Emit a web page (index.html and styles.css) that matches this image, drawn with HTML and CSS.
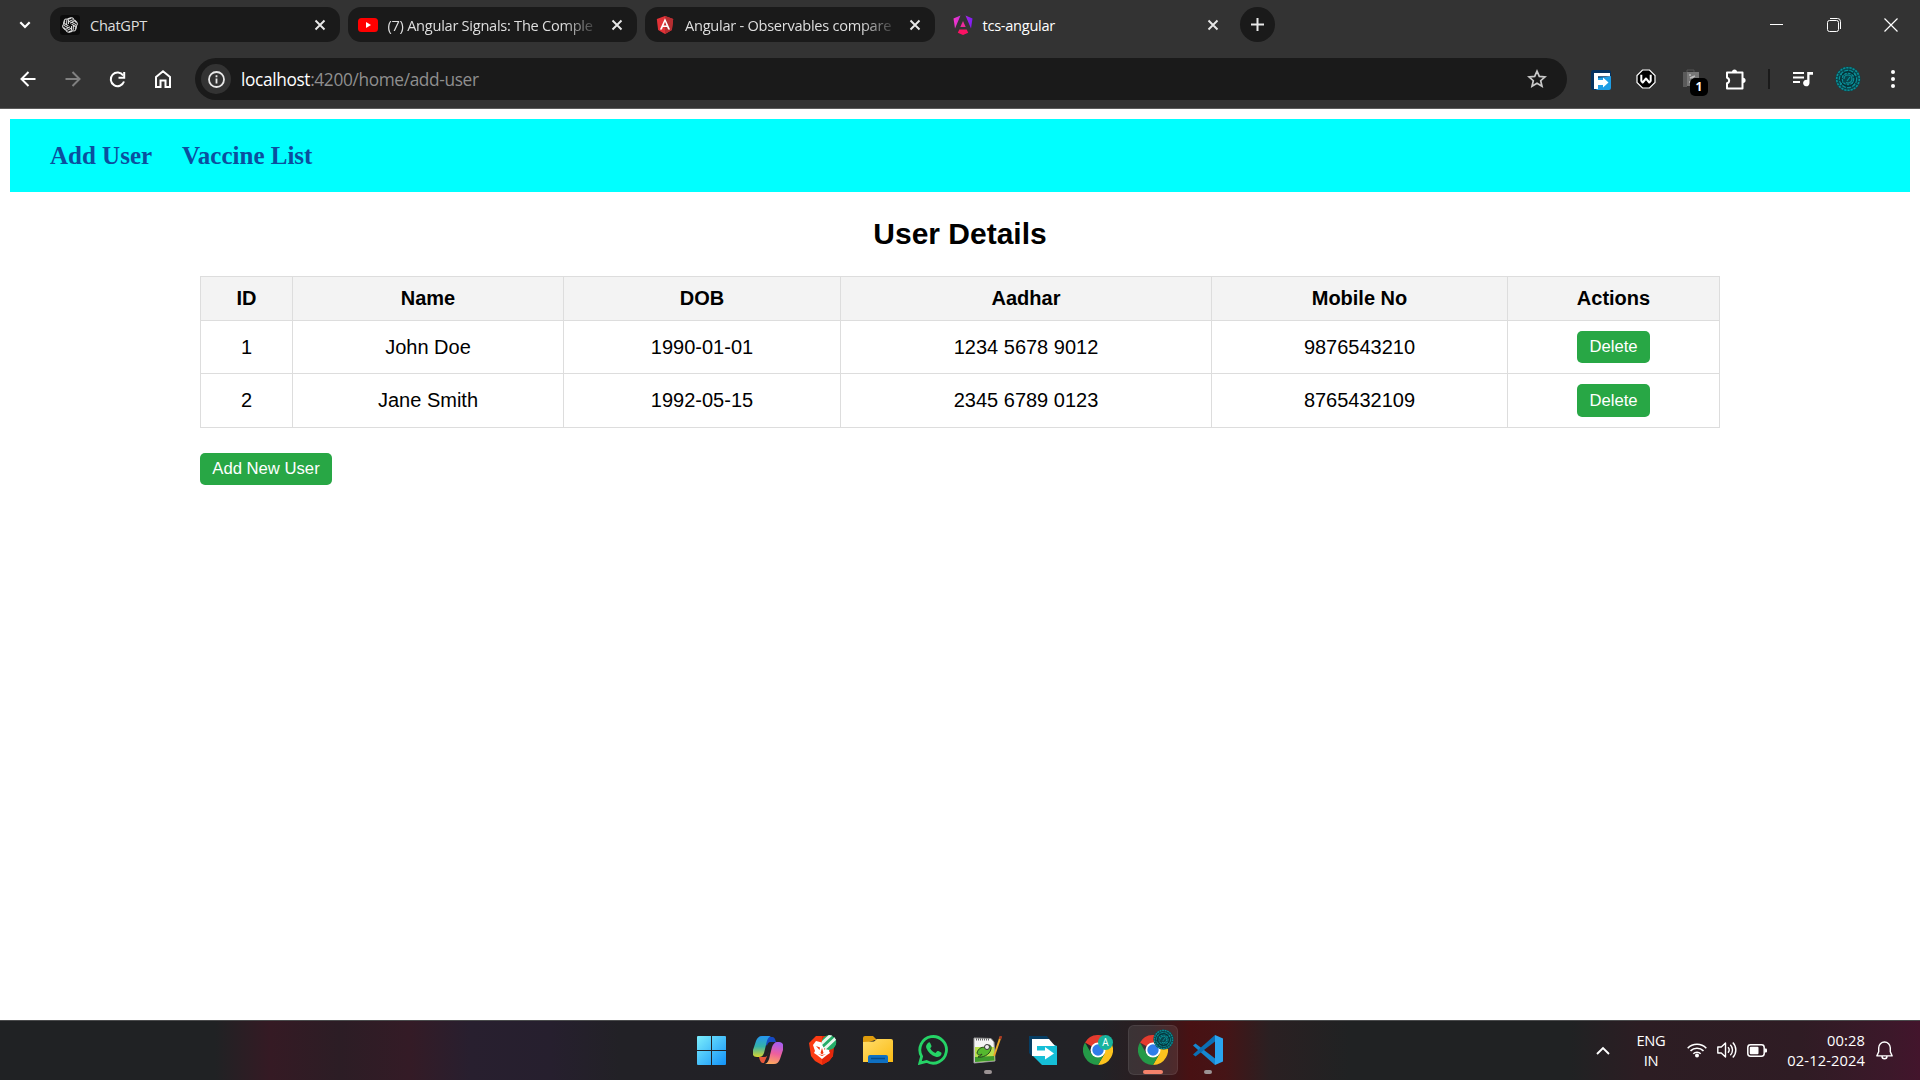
FILE: index.html
```html
<!DOCTYPE html>
<html lang="en">
<head>
<meta charset="utf-8">
<title>tcs-angular</title>
<link rel="stylesheet" href="styles.css">
</head>
<body>
<svg class="defs" width="0" height="0" aria-hidden="true">
  <defs>
    <symbol id="close" viewBox="0 0 12 12"><path d="M1.500 1.500l9 9M10.500 1.500l-9 9" fill="none" stroke="currentColor" stroke-width="1.900"/></symbol>
    <symbol id="swirl" viewBox="0 0 26 26">
      <circle cx="13" cy="13" r="12.500" fill="#07474e"/>
      <g fill="none" stroke="#0b8f97">
        <circle cx="13" cy="13" r="11.300" stroke-width="1.600" stroke-dasharray="2.200 1"/>
        <circle cx="13" cy="13" r="8.600" stroke-width="1.200" stroke-dasharray="4 1.200"/>
        <circle cx="13" cy="13" r="5.800" stroke-width="1.300" stroke-dasharray="2.500 1.300"/>
        <path d="M9 13a4 4 0 0 1 8 0M17 13a4 4 0 0 1-6 3.500M12 15l3-4M5 8l3 2M21 8l-3 2M5 19l3-3M20 19l-3-3" stroke-width="1.200"/>
      </g>
      <circle cx="13" cy="13" r="7.200" fill="none" stroke="#042a30" stroke-width="1"/>
    </symbol>
    <symbol id="chrome" viewBox="0 0 30 30">
      <path d="M15 15L2 7.500A15 15 0 0 1 28 7.500z" fill="#e33b2e"/>
      <path d="M15 7.500H28A15 15 0 0 1 15 30l6.500-11.200z" fill="#fcc31e"/>
      <path d="M2 7.500l6.500 11.200L15 22.500l6.500-3.700L15 30A15 15 0 0 1 2 7.500z" fill="#249a48"/>
      <circle cx="15" cy="15" r="7.500" fill="#fff"/>
      <circle cx="15" cy="15" r="5.700" fill="#2f7de9"/>
    </symbol>
    <linearGradient id="winG" x1="0" y1="0" x2="1" y2="1"><stop offset="0" stop-color="#7ceefc"/><stop offset="1" stop-color="#1292f8"/></linearGradient>
    <linearGradient id="ngG" x1="0" y1="0" x2="1" y2="0"><stop offset="0" stop-color="#f637c8"/><stop offset="1" stop-color="#7c1cf5"/></linearGradient>
    <linearGradient id="cpA" x1="0" y1="0" x2="0" y2="1"><stop offset="0" stop-color="#2496f2"/><stop offset=".5" stop-color="#35b2a8"/><stop offset="1" stop-color="#dad62f"/></linearGradient>
    <linearGradient id="cpB" x1="0.500" y1="0" x2="0.300" y2="1"><stop offset="0" stop-color="#a75df1"/><stop offset=".5" stop-color="#ee5f9d"/><stop offset="1" stop-color="#fdab5c"/></linearGradient>
    <linearGradient id="fold" x1="0" y1="0" x2="1" y2="1"><stop offset="0" stop-color="#ffdd6b"/><stop offset="1" stop-color="#fbbb13"/></linearGradient>
    <clipPath id="badgeClip"><circle cx="20" cy="7.500" r="7.500"/></clipPath>
  </defs>
</svg>

<header class="browser">
  <div class="tabstrip">
    <div class="tab-search"><svg width="12" height="8" viewBox="0 0 12 8"><path d="M1.300 1.300L6 6l4.700-4.700" fill="none" stroke="#fff" stroke-width="2.200"/></svg></div>
    <div class="tab">
      <svg class="fav" width="20" height="20" viewBox="0 0 20 20"><rect width="20" height="20" rx="3" fill="#0b0b0b"/>
        <g fill="none" stroke="#ddd" stroke-width="1.150" stroke-linejoin="round" transform="translate(1 1) scale(.9)">
          <g id="petal"><path d="M8.300 9V4.900a3.200 3.200 0 0 1 5.800-1.600M8.300 6.700L12 4.600a3.200 3.200 0 0 1 4.700 3"/></g>
          <use href="#petal" transform="rotate(60 10 10)"/><use href="#petal" transform="rotate(120 10 10)"/><use href="#petal" transform="rotate(180 10 10)"/><use href="#petal" transform="rotate(240 10 10)"/><use href="#petal" transform="rotate(300 10 10)"/>
        </g></svg>
      <span class="tab-title">ChatGPT</span>
      <svg class="x" width="12" height="12"><use href="#close"/></svg>
    </div>
    <div class="tab">
      <svg class="fav" width="20" height="20" viewBox="0 0 20 20"><rect y="3" width="20" height="14" rx="3.500" fill="#f00"/><path d="M8 7l5 3-5 3z" fill="#fff"/></svg>
      <span class="tab-title fade">(7) Angular Signals: The Comple</span>
      <svg class="x" width="12" height="12"><use href="#close"/></svg>
    </div>
    <div class="tab">
      <svg class="fav" width="20" height="20" viewBox="0 0 20 20"><path d="M10 1l8.200 3-1.300 11L10 19l-6.900-4L1.800 4z" fill="#e23237"/><path d="M10 1l8.200 3-1.300 11L10 19z" fill="#b52e31"/><path d="M10 3.200L4.900 14.500h2l1-2.500h4.200l1 2.500h2zM10 6.800l1.500 3.600h-3z" fill="#fff"/></svg>
      <span class="tab-title fade">Angular - Observables compare</span>
      <svg class="x" width="12" height="12"><use href="#close"/></svg>
    </div>
    <div class="tab active">
      <svg class="fav" width="20" height="20" viewBox="0 0 20 20"><path d="M.5 3.500L7.500.5 2 13.500zM12.500.5l7 3L18 13.500z" fill="url(#ngG)"/><path d="M10 6l2.700 6H7.300z" fill="#ed2b9b"/><path d="M6.300 14.500h7.400l1.500 3.200L10 20l-5.200-2.300z" fill="#fb1264"/></svg>
      <span class="tab-title">tcs-angular</span>
      <svg class="x" width="12" height="12"><use href="#close"/></svg>
    </div>
    <div class="new-tab"><svg width="13" height="13" viewBox="0 0 13 13"><path d="M6.500 0v13M0 6.500h13" stroke="#e8e8e8" stroke-width="2"/></svg></div>
    <div class="win-controls">
      <span><svg width="13" height="13" viewBox="0 0 13 13"><path d="M0 6.500h13" stroke="#fff"/></svg></span>
      <span><svg width="14" height="14" viewBox="0 0 14 14" fill="none" stroke="#fff"><rect x=".5" y="2.500" width="11" height="11" rx="2"/><path d="M3 .5h7.500a3 3 0 0 1 3 3V11"/></svg></span>
      <span><svg width="14" height="14" viewBox="0 0 14 14"><path d="M.5.5l13 13M13.500.5l-13 13" stroke="#fff" stroke-width="1.200"/></svg></span>
    </div>
  </div>

  <div class="toolbar">
    <span class="tool"><svg width="16" height="16" viewBox="0 0 16 16"><path d="M15.500 8H2M8.500 1L1.500 8l7 7" fill="none" stroke="#fff" stroke-width="2"/></svg></span>
    <span class="tool"><svg width="16" height="16" viewBox="0 0 16 16"><path d="M.5 8H14M7.500 1l7 7-7 7" fill="none" stroke="#808080" stroke-width="2"/></svg></span>
    <span class="tool"><svg width="17" height="17" viewBox="0 0 17 17"><path d="M14.200 4.500A6.800 6.800 0 1 0 15 10.500" fill="none" stroke="#fff" stroke-width="2"/><path d="M15.200 1v5.700H9.500" fill="none" stroke="#fff" stroke-width="2"/></svg></span>
    <span class="tool"><svg width="16" height="18" viewBox="0 0 16 18"><path d="M1 7l7-5.700L15 7v10h-4.500v-6.500h-5V17H1z" fill="none" stroke="#fff" stroke-width="2"/></svg></span>
    <div class="omnibox">
      <span class="site-info"><svg width="17" height="17" viewBox="0 0 17 17"><circle cx="8.500" cy="8.500" r="7.500" fill="none" stroke="#e8e8e8" stroke-width="1.800"/><path d="M8.500 7.500v5M8.500 4.300v1.900" stroke="#e8e8e8" stroke-width="1.800"/></svg></span>
      <span class="url"><b>localhost</b>:4200/home/add-user</span>
      <svg class="star" width="20" height="20" viewBox="0 0 20 20"><path d="M10 2.200l2.300 5.200 5.700.5-4.300 3.800 1.300 5.600-5-3-5 3 1.300-5.600L2 7.900l5.700-.5z" fill="none" stroke="#c9c9c9" stroke-width="1.700"/></svg>
    </div>
    <span class="tool"><svg class="low" width="20" height="20" viewBox="0 0 20 20"><rect width="20" height="20" rx="2.500" fill="#04315f"/><path d="M6 20l-3-3V8l12-1 5-1v12a2 2 0 0 1-2 2z" fill="#1e9de4"/><path d="M3 3h16v3.300H7V10h5V7.500l5.500 5-5.500 5V15H7v4H3z" fill="#fff"/></svg></span>
    <span class="tool"><svg width="20" height="20" viewBox="0 0 20 20"><path d="M6.500 1h7L19 6.500v7L13.500 19h-7L1 13.500v-7z" fill="#000" stroke="#fff" stroke-width="1.200"/><path d="M5.300 5.800v6l1.400 1.700L10 9.500l3.300 4 1.400-1.700v-6" fill="none" stroke="#fff" stroke-width="2" stroke-linejoin="round"/></svg></span>
    <span class="tool badge-host"><svg width="20" height="20" viewBox="0 0 20 20"><path d="M6 3V1h7v2" fill="none" stroke="#555"/><path d="M2 3h16v14H2z" fill="#777"/><path d="M2 3h4v15H2z" fill="#5a5a5a"/><path d="M8 6h2M9 9l5-2M12 7v5M8 13h5" stroke="#bbb" stroke-width="1.500"/></svg><i class="badge">1</i></span>
    <span class="tool"><svg class="puzzle" width="21" height="21" viewBox="0 0 21 21"><path d="M2 3.500h15.500v16H2v-5.200a2.900 2.900 0 0 0 0-5.600z" fill="none" stroke="#fff" stroke-width="2" stroke-linejoin="round"/><path d="M7 3a2.500 2.500 0 0 1 5 0zM18 8.700a2.600 2.600 0 0 1 0 5.200z" fill="#fff"/></svg></span>
    <span class="divider"></span>
    <span class="tool"><svg width="20" height="16" viewBox="0 0 20 16"><path d="M0 2h11M0 6.500h11M0 11h7" stroke="#fff" stroke-width="2"/><path d="M20 1v2.800h-3.500V12a3.200 3.200 0 1 1-2.300-3V1z" fill="#fff"/></svg></span>
    <span class="tool"><svg width="26" height="26"><use href="#swirl"/></svg></span>
    <span class="tool"><svg width="4" height="18" viewBox="0 0 4 18" fill="#fff"><circle cx="2" cy="2" r="2"/><circle cx="2" cy="9" r="2"/><circle cx="2" cy="16" r="2"/></svg></span>
  </div>
</header>

<main class="page">
  <nav class="nav"><a>Add User</a><a>Vaccine List</a></nav>
  <section class="users">
    <h2>User Details</h2>
    <table>
      <colgroup><col class="c-id"><col class="c-name"><col class="c-dob"><col class="c-aadhar"><col class="c-mobile"><col class="c-actions"></colgroup>
      <thead><tr><th>ID</th><th>Name</th><th>DOB</th><th>Aadhar</th><th>Mobile No</th><th>Actions</th></tr></thead>
      <tbody>
        <tr class="first"><td>1</td><td>John Doe</td><td>1990-01-01</td><td>1234 5678 9012</td><td>9876543210</td><td><button>Delete</button></td></tr>
        <tr><td>2</td><td>Jane Smith</td><td>1992-05-15</td><td>2345 6789 0123</td><td>8765432109</td><td><button class="tall">Delete</button></td></tr>
      </tbody>
    </table>
    <button class="add">Add New User</button>
  </section>
</main>

<footer class="taskbar">
  <div class="apps">
    <span class="app"><svg width="29" height="29" viewBox="0 0 29 29"><path d="M0 1a1 1 0 0 1 1-1h13v14H0zM15 0h13a1 1 0 0 1 1 1v13H15zM0 15h14v14H1a1 1 0 0 1-1-1zM15 15h14v13a1 1 0 0 1-1 1H15z" fill="url(#winG)"/></svg></span>
    <span class="app"><svg width="30" height="28" viewBox="0 0 30 28"><path d="M8 1h11c2 0 3 1 4 5h-5c-3 0-3.500 2-4 4z" fill="#1549c4"/><path d="M11 27h-1c-2 0-3-2-4-6h5c3 0 4-2 5-5z" fill="#e8573b"/><path d="M9 0h9c-3 1-4 4-5 9l-2 8c-1 3-3 4-5 4H4c-4 0-5-3-4-7L3 5c1-3 3-5 6-5z" fill="url(#cpA)"/><path d="M21 28h-9c3-1 4-4 5-9l2-8c1-3 3-5 5-5h2c4 0 5 3 4 8l-3 9c-1 3-3 5-6 5z" fill="url(#cpB)"/></svg></span>
    <span class="app"><svg width="28" height="30" viewBox="0 0 28 30"><path d="M7 1h11l7 6-1 14-4 5-7 4-7-4-4-5L0 8z" fill="#fb3b13"/><path d="M13 1h5l7 6-1 14-4 5-7 4z" fill="#e5270b"/><path d="M7 6l6 1.500L19 6l3 4-2 6 1 2-3 2-5 4-5-4-3-2 1-2-2-6z" fill="#fff"/><path d="M7 11l4 1.500-.5 2.500zM19 11l-4 1.500.5 2.500zM13 13l1.500 5-1.500 1.500-1.500-1.500zM9 19l4 2 4-2-4 1z" fill="#f3350d"/><g clip-path="url(#badgeClip)"><circle cx="20" cy="7.500" r="7.500" fill="#26ad68"/><path d="M11 10l12-11M14 15L28 2" stroke="#e8f8ee" stroke-width="3"/></g></svg></span>
    <span class="app"><svg width="30" height="28" viewBox="0 0 30 28"><path d="M0 2a2 2 0 0 1 2-2h8l4 4h-2L0 8z" fill="#df9c0c"/><path d="M0 6l11-.5L14 3h14a2 2 0 0 1 2 2v21H0z" fill="url(#fold)"/><path d="M5 27v-6a2 2 0 0 1 2-2h16a2 2 0 0 1 2 2v6z" fill="#0f70c2"/><path d="M8 22.500h14" stroke="#064b8a" stroke-width="1.500"/></svg></span>
    <span class="app"><svg width="30" height="30" viewBox="0 0 30 30"><path d="M1.800 28.200l1.800-6.800A13.300 13.300 0 1 1 8.600 26.400z" fill="none" stroke="#25d366" stroke-width="2.800"/><path d="M10 8c1-1 1.800-.8 2.200 0l1.300 3c.2.700-.8 1.700-1.300 2.300 1.300 2.500 3 3.900 5.300 4.800l1.600-1.800c.4-.4.800-.4 1.300-.2l2.800 1.500c.6.300.3 2-.5 3-1 1.200-3 1.700-5 1.100C13.500 20.400 10 17.300 8.300 13c-.7-2 .3-3.800 1.700-5z" fill="#25d366"/></svg></span>
    <span class="app running"><svg width="29" height="28" viewBox="0 0 29 28"><path d="M1 2l17 .5L21 6l1 19-21 2z" fill="#f4f4f4" stroke="#999"/><path d="M2 11h19l.5 13.500L2 26z" fill="#b8e04c"/><path d="M2 21l19-1 .5 4.500L2 26z" fill="#3d9a2c"/><path d="M4 17c1-5 6-7 9-5 1-4 6-4 5 1-1 6-9 9-13 8 2-1 4-2 4-3-3 2-4 1-5-1z" fill="#55b82e" stroke="#26451d"/><circle cx="14" cy="11" r="2.500" fill="#eee" stroke="#333"/><path d="M3 3.500h14" stroke="#666" stroke-width="2" stroke-dasharray="1 1"/><path d="M27.500 1L21 20" stroke="#e9a629" stroke-width="2"/><path d="M28 0l-1 3" stroke="#a93a24" stroke-width="2.500"/></svg></span>
    <span class="app"><svg width="28" height="29" viewBox="0 0 28 29"><path d="M0 0h18l3 4H4v17L0 17z" fill="#063d63"/><path d="M4 6l10-2 14 6v19H13l-9-9z" fill="#15bfd7"/><path d="M3 3h17l6 7H8v10H3z" fill="#fff"/><path d="M8 14.500h8V11l9 6.500-9 6V20H8z" fill="#fff"/></svg></span>
    <span class="app"><svg width="30" height="30" viewBox="0 0 30 30"><use href="#chrome"/><circle cx="22.500" cy="7.500" r="7.500" fill="#18b39d"/><text x="22.500" y="11.200" text-anchor="middle" class="mono">A</text></svg></span>
    <span class="app running current"><svg class="wide" width="36" height="42" viewBox="0 0 36 42"><use href="#chrome" x="0" y="6" width="30" height="30"/><use href="#swirl" x="15" y="0" width="21" height="21"/></svg></span>
    <span class="app running"><svg width="30" height="30" viewBox="0 0 30 30"><path d="M0 10.500l2.500-2L24 25l-2 5z" fill="#1687d0"/><path d="M0 19.500l2.500 2L24 5l-2-5z" fill="#0b6fb5"/><path d="M22 0l8 3.500v23L22 30z" fill="#2aa4ef"/></svg></span>
  </div>
  <div class="tray">
    <svg class="up" width="14" height="9" viewBox="0 0 14 9"><path d="M1 8l6-6 6 6" fill="none" stroke="#fff" stroke-width="1.900"/></svg>
    <span class="lang">ENG<br>IN</span>
    <svg width="20" height="16" viewBox="0 0 20 16"><g fill="none" stroke="#fff" stroke-width="1.600"><path d="M.7 6.200a13 13 0 0 1 18.600 0M3.500 8.900a9.200 9.200 0 0 1 13 0M6.300 11.700a5.300 5.300 0 0 1 7.400 0"/></g><circle cx="10" cy="13.600" r="2" fill="#fff"/></svg>
    <svg width="20" height="18" viewBox="0 0 20 18"><g fill="none" stroke="#fff" stroke-width="1.400"><path d="M.8 6h3.500L8.500 2v14L4.300 12H.8z" stroke-linejoin="round"/><path d="M11 6.300a4 4 0 0 1 0 5.400M13.300 3.700a7.500 7.500 0 0 1 0 10.600M15.800 1.500a10.800 10.800 0 0 1 0 15"/></g></svg>
    <svg width="20" height="13" viewBox="0 0 20 13"><rect x=".8" y=".8" width="16.400" height="11.400" rx="2.700" fill="none" stroke="#fff" stroke-width="1.500"/><path d="M18 4.500h1a1 1 0 0 1 1 1v2a1 1 0 0 1-1 1h-1z" fill="#fff"/><rect x="2.800" y="2.800" width="8.700" height="7.400" rx="1" fill="#fff"/></svg>
    <span class="clock">00:28<br>02-12-2024</span>
    <svg class="bell" width="17" height="19" viewBox="0 0 17 19"><path d="M8.500 1a5.800 5.800 0 0 0-5.800 5.800v4L.9 14.900h15.200l-1.800-4.100v-4A5.800 5.800 0 0 0 8.500 1zM6 15.300a2.500 2.500 0 0 0 5 0" fill="none" stroke="#fff" stroke-width="1.400" stroke-linejoin="round"/></svg>
  </div>
</footer>
</body>
</html>
```
FILE: styles.css
```css
* { box-sizing: border-box; }
body {
  margin: 0;
  height: 1080px;
  display: flex;
  flex-direction: column;
  background: #fff;
  overflow: hidden;
}
svg { display: block; flex: none; }
.defs { position: absolute; }

/* Browser frame */
.browser {
  flex: none;
  height: 109px;
  background: #333;
  border-bottom: 1px solid #5b5b5b;
  color: #dedede;
  font-family: "Open Sans", sans-serif;
}
.tabstrip { display: flex; height: 50px; padding-top: 7px; }
.tab-search { width: 50px; height: 35px; display: flex; align-items: center; justify-content: center; }
.tab {
  display: flex;
  align-items: center;
  width: 289.500px;
  height: 35px;
  margin-right: 8px;
  padding: 0 14px 0 10px;
  border-radius: 13px;
  background: #1a1a1a;
}
.tab.active { width: 290px; background: none; color: #fff; margin-right: 7px; }
.tab .x { color: #e8e8e8; }
.tab-title {
  flex: 1;
  margin: 0 8px 0 10px;
  padding-top: 1px;
  white-space: nowrap;
  font-size: 14.600px;
  line-height: 24px;
  letter-spacing: -0.270px;
}
.fade { mask-image: linear-gradient(90deg, #000 calc(100% - 40px), transparent calc(100% - 2px)); }
.new-tab {
  width: 35px;
  height: 35px;
  border-radius: 50%;
  background: #1a1a1a;
  display: flex;
  align-items: center;
  justify-content: center;
}
.win-controls { display: flex; margin: 0 1px 0 auto; height: 35px; }
.win-controls span { width: 57px; display: flex; align-items: center; justify-content: center; }

.toolbar { display: flex; align-items: center; height: 58px; padding: 0 5px; }
.tool { width: 45px; display: flex; align-items: center; justify-content: center; }
.low { margin-top: 2px; }
.omnibox {
  flex: 1;
  height: 42px;
  margin: 0 11px 0 10px;
  padding: 0 20px 0 6px;
  border-radius: 21px;
  background: #1a1a1a;
  display: flex;
  align-items: center;
}
.site-info {
  width: 30px;
  height: 30px;
  border-radius: 50%;
  background: #333;
  display: flex;
  align-items: center;
  justify-content: center;
}
.url { flex: 1; margin-left: 10px; font-size: 17.300px; letter-spacing: -0.360px; color: #8f8f8f; }
.url b { font-weight: 400; color: #fff; }
.badge-host { position: relative; }
.badge {
  position: absolute;
  left: 22px;
  top: 9px;
  width: 18px;
  height: 18px;
  border-radius: 5px;
  background: #000;
  color: #fff;
  font: 700 12px/18px "Open Sans", sans-serif;
  text-align: center;
}
.divider { width: 22px; display: flex; justify-content: center; }
.divider::before { content: ""; width: 2px; height: 20px; background: #1a1a1a; }

/* Page */
.page { flex: 1; padding: 10px 10px 0; font-family: "Liberation Sans", Arial, sans-serif; }
.nav {
  height: 73px;
  padding: 0 40px;
  display: flex;
  align-items: center;
  gap: 30px;
  background: #0ff;
  color: #0b4f9e;
  font: 700 25px "Liberation Serif", "Times New Roman", serif;
}
.users { width: 1520px; margin: 0 auto; }
h2 { margin: 24px 0; font-size: 30px; line-height: 36px; text-align: center; }
table { width: 1519px; table-layout: fixed; border-collapse: collapse; font-size: 20px; text-align: center; }
th, td { border: 1px solid #ddd; padding: 0; }
th { background: #f3f3f3; height: 44px; }
td { height: 54px; }
.first td { height: 53px; }
.c-id { width: 92px; }
.c-name { width: 271px; }
.c-dob { width: 277px; }
.c-aadhar { width: 371px; }
.c-mobile { width: 296px; }
.c-actions { width: 212px; }
button {
  display: block;
  width: 73px;
  height: 32px;
  margin: 0 auto;
  padding: 0;
  border: 0;
  border-radius: 5px;
  background: #28a745;
  color: #fff;
  font: 16.667px "Liberation Sans", Arial, sans-serif;
}
.tall { height: 33px; }
.add { width: 132px; margin: 25px 0 0; }

/* Taskbar */
.taskbar {
  flex: none;
  height: 60px;
  display: flex;
  justify-content: space-between;
  padding: 0 27px 0 684px;
  border-top: 1px solid #4a4b4c;
  background: linear-gradient(90deg, #202224 0, #202224 215px, #351a24 270px, #2c1d25 340px, #341b26 410px, #281f2f 470px, #261f2e 550px, #222126 620px, #222226 1100px, #2c1d20 1150px, #481113 1190px, #451416 1225px, #2a2022 1270px, #202223 1350px, #202223 1570px, #2c1d23 1640px, #2f1c24 1800px, #3c182a 1890px, #43152c 1920px);
  color: #fff;
  font-family: "Open Sans", sans-serif;
}
.apps { display: flex; }
.app { position: relative; width: 55px; height: 58px; display: flex; align-items: center; justify-content: center; }
.app:first-child { width: 56px; padding-right: 1px; }
.running::after {
  content: "";
  position: absolute;
  left: 24px;
  top: 49px;
  width: 8px;
  height: 4px;
  border-radius: 2px;
  background: #9b9394;
}
.current::before {
  content: "";
  position: absolute;
  inset: 4px 2px 4px 3px;
  border-radius: 6px;
  background: rgba(255, 255, 255, 0.090);
  border: 1px solid rgba(255, 255, 255, 0.070);
}
.current::after { left: 18px; width: 20px; background: #f4826b; }
.wide { position: relative; margin: 0 0 0 6px; }
.mono { font: 10px "Open Sans", sans-serif; fill: #fff; }
.tray { display: flex; align-items: center; height: 58px; font-size: 14.700px; line-height: 20px; }
.up { margin-right: 26px; }
.lang { width: 30px; margin-right: 21px; text-align: center; letter-spacing: -0.300px; white-space: nowrap; }
.tray svg + svg { margin-left: 10px; }
.clock { width: 78px; margin: 0 11px 0 20px; text-align: right; letter-spacing: 0.100px; white-space: nowrap; }
```
